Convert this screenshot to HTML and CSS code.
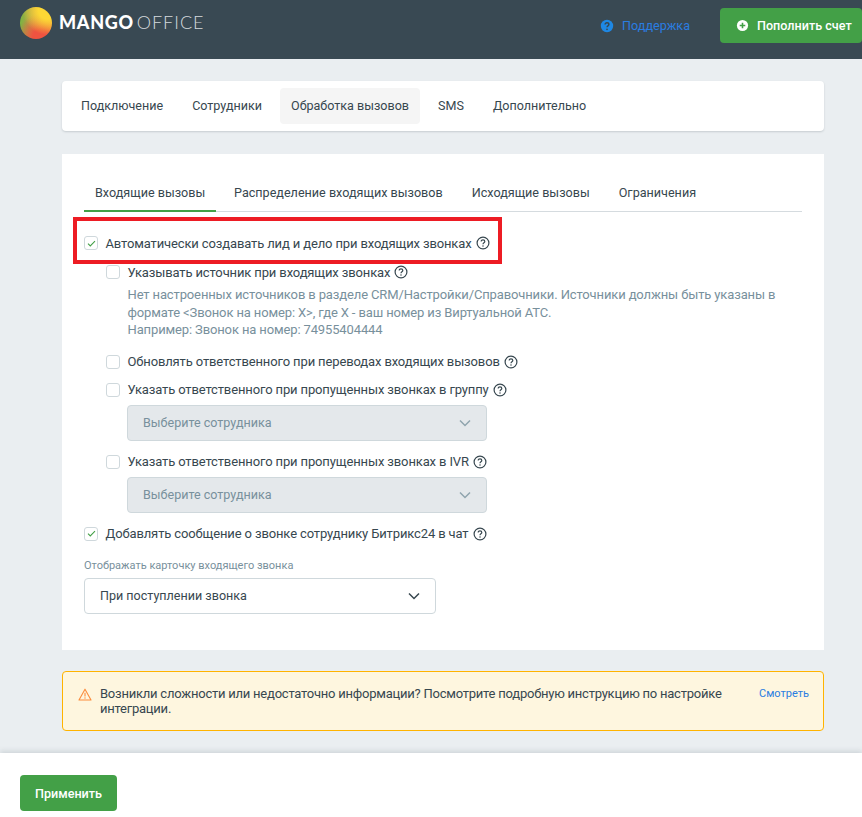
FILE: index.html
```html
<!DOCTYPE html>
<html lang="ru">
<head>
<meta charset="utf-8">
<title>MANGO OFFICE</title>
<link rel="stylesheet" href="styles.css">
</head>
<body>
<svg class="defs" width="0" height="0" aria-hidden="true">
  <defs>
    <symbol id="help" viewBox="0 0 14 14">
      <circle cx="7" cy="7" r="5.9" fill="none" stroke="currentColor" stroke-width="1.2"/>
      <path d="M5.2 5.5c0-1 .8-1.7 1.8-1.7s1.8.7 1.8 1.6c0 1.4-1.8 1.4-1.8 2.8" fill="none" stroke="currentColor" stroke-width="1.2"/>
      <circle cx="7" cy="10" r=".75" fill="currentColor"/>
    </symbol>
    <symbol id="chev" viewBox="0 0 12 8">
      <path d="M1 1.5l5 5 5-5" fill="none" stroke="currentColor" stroke-width="1.5"/>
    </symbol>
    <symbol id="tick" viewBox="0 0 10 8">
      <path d="M1 4.2l2.6 2.6L9 1.2" fill="none" stroke="#43a047" stroke-width="1.2"/>
    </symbol>
  </defs>
</svg>

<header class="topbar">
  <div class="brand">
    <span class="logo-mark"></span>
    <span class="logo-text"><b>MANGO</b> <span>OFFICE</span></span>
  </div>
  <div class="top-actions">
    <a class="support">
      <svg class="support-icon" viewBox="0 0 14 14"><circle cx="7" cy="7" r="6.2" fill="#1e88e5"/><path d="M5.1 5.6c0-1.1.8-1.8 1.9-1.8s1.9.7 1.9 1.7c0 1.4-1.9 1.3-1.9 2.7" fill="none" stroke="#37474f" stroke-width="1.4"/><circle cx="7" cy="10.3" r=".85" fill="#37474f"/></svg>
      Поддержка
    </a>
    <button class="btn topup">
      <svg class="plus-icon" viewBox="0 0 14 14"><circle cx="7" cy="7" r="6" fill="#fff"/><path d="M7 4v6M4 7h6" stroke="#43a047" stroke-width="1.7"/></svg>
      Пополнить счет
    </button>
  </div>
</header>

<main class="content">
  <nav class="card main-tabs">
    <a class="main-tab">Подключение</a>
    <a class="main-tab">Сотрудники</a>
    <a class="main-tab is-active">Обработка вызовов</a>
    <a class="main-tab">SMS</a>
    <a class="main-tab">Дополнительно</a>
  </nav>

  <section class="card settings">
    <div class="sub-tabs">
      <a class="sub-tab is-active">Входящие вызовы</a>
      <a class="sub-tab">Распределение входящих вызовов</a>
      <a class="sub-tab">Исходящие вызовы</a>
      <a class="sub-tab">Ограничения</a>
    </div>

    <div class="form">
      <div class="highlight"></div>
      <label class="row">
        <span class="check"><svg class="tick"><use href="#tick"/></svg></span>
        Автоматически создавать лид и дело при входящих звонках
        <svg class="help"><use href="#help"/></svg>
      </label>

      <div class="nested">
        <label class="row row-source">
          <span class="check"></span>
          Указывать источник при входящих звонках
          <svg class="help"><use href="#help"/></svg>
        </label>
        <p class="hint">Нет настроенных источников в разделе CRM/Настройки/Справочники. Источники должны быть указаны в формате &lt;Звонок на номер: X&gt;, где X - ваш номер из Виртуальной АТС.<br>Например: Звонок на номер: 74955404444</p>

        <label class="row row-update">
          <span class="check"></span>
          Обновлять ответственного при переводах входящих вызовов
          <svg class="help"><use href="#help"/></svg>
        </label>
        <label class="row row-group">
          <span class="check"></span>
          Указать ответственного при пропущенных звонках в группу
          <svg class="help"><use href="#help"/></svg>
        </label>
        <div class="select is-disabled">
          Выберите сотрудника
          <svg class="chev"><use href="#chev"/></svg>
        </div>
        <label class="row row-ivr">
          <span class="check"></span>
          Указать ответственного при пропущенных звонках в IVR
          <svg class="help"><use href="#help"/></svg>
        </label>
        <div class="select is-disabled">
          Выберите сотрудника
          <svg class="chev"><use href="#chev"/></svg>
        </div>
      </div>

      <label class="row row-chat">
        <span class="check"><svg class="tick"><use href="#tick"/></svg></span>
        Добавлять сообщение о звонке сотруднику Битрикс24 в чат
        <svg class="help"><use href="#help"/></svg>
      </label>

      <div class="field-label">Отображать карточку входящего звонка</div>
      <div class="select select-card">
        При поступлении звонка
        <svg class="chev"><use href="#chev"/></svg>
      </div>
    </div>
  </section>

  <aside class="alert">
    <svg class="warn" viewBox="0 0 14 13"><path d="M7 1.2L13 12H1z" fill="none" stroke="#fb8c3c" stroke-width="1.1" stroke-linejoin="round"/><path d="M7 4.8v3.6" stroke="#fb8c3c" stroke-width="1.1"/><circle cx="7" cy="10" r=".7" fill="#fb8c3c"/></svg>
    <p class="alert-text">Возникли сложности или недостаточно информации? Посмотрите подробную инструкцию по настройке интеграции.</p>
    <a class="alert-link">Смотреть</a>
  </aside>
</main>

<footer class="footer">
  <button class="btn apply">Применить</button>
</footer>
</body>
</html>
```
FILE: styles.css
```css
* { box-sizing: border-box; }
html, body { margin: 0; height: 817px; overflow: hidden; }
body {
  background: #eaeef1;
  font-family: Roboto, "Liberation Sans", sans-serif;
  font-size: 13px;
  letter-spacing: -0.13px;
  color: #37474f;
  display: flex;
  flex-direction: column;
}
.defs { position: absolute; }

.topbar {
  height: 59px;
  background: #394953;
  display: flex;
  justify-content: space-between;
  padding: 9px 0 0 20px;
  flex: none;
}
.brand { display: flex; align-items: flex-start; gap: 7px; margin-top: -2px; }
.logo-mark {
  width: 32px;
  height: 32px;
  border-radius: 50%;
  background:
    radial-gradient(circle at 85% 10%, #fdd835 0 22%, transparent 62%),
    radial-gradient(circle at 65% 95%, #ef5340 0 22%, transparent 65%),
    linear-gradient(90deg, #7cb342 0%, #c9a04a 50%, #fbb034 100%);
}
.logo-text {
  font-family: Lato, "Open Sans", sans-serif;
  font-size: 18px;
  line-height: 28px;
  margin-top: 1px;
  color: #fff;
  letter-spacing: .7px;
  word-spacing: -2.5px;
  white-space: nowrap;
}
.logo-text b { font-weight: 900; }
.logo-text span { font-weight: 300; color: #d5dadd; letter-spacing: 1px; }

.top-actions { display: flex; align-items: flex-start; }
.support {
  color: #2a7de1;
  display: flex;
  align-items: center;
  gap: 8px;
  height: 33px;
  margin-right: 30px;
  font-size: 12.6px;
  letter-spacing: 0;
}
.support-icon { width: 14px; height: 14px; }
.btn {
  border: 0;
  background: #43a047;
  color: #fff;
  font: inherit;
  font-size: 12.6px;
  letter-spacing: 0;
  font-weight: 500;
  border-radius: 4px;
  display: flex;
  align-items: center;
}
.topup {
  width: 142px;
  height: 35px;
  margin-top: -1px;
  padding: 0 0 0 16px;
  gap: 8px;
  white-space: nowrap;
}
.plus-icon { width: 13px; height: 13px; flex: none; }

.content {
  flex: 1;
  padding: 22px 38px 0 62px;
}
.card {
  background: #fff;
  border-radius: 4px;
}
.main-tabs {
  height: 50px;
  display: flex;
  align-items: center;
  padding: 0 0 0 8px;
  box-shadow: 0 1px 2px rgba(55, 71, 79, .2);
}
.main-tab {
  height: 36px;
  line-height: 36px;
  padding: 0 11px;
  margin-right: 7px;
  border-radius: 4px;
  white-space: nowrap;
  font-size: 12.55px;
  letter-spacing: 0;
}
.main-tab.is-active { background: #f5f5f5; }

.settings {
  margin-top: 23px;
  padding: 20px 22px 36px;
  height: 496px;
  border-radius: 0;
}
.sub-tabs {
  display: flex;
  height: 38px;
  border-bottom: 1px solid #d5dbdf;
}
.sub-tab {
  height: 38px;
  line-height: 37px;
  padding: 0 14.5px;
  white-space: nowrap;
  font-size: 12.6px;
  letter-spacing: 0;
}
.sub-tab.is-active {
  padding: 0 11px;
  width: 132px;
  margin-right: 3.5px;
  border-bottom: 2px solid #43a047;
}

.form { position: relative; padding-top: 21px; }
.highlight {
  position: absolute;
  left: -11px;
  top: 5px;
  width: 429px;
  height: 47px;
  border: 4px solid #ed1c24;
  pointer-events: none;
}
.row {
  display: flex;
  align-items: center;
  height: 20px;
  white-space: nowrap;
}
.check {
  width: 14px;
  height: 14px;
  border: 1px solid #cfd8dc;
  border-radius: 3px;
  background: #fff;
  margin-right: 7.5px;
  display: flex;
  align-items: center;
  justify-content: center;
  flex: none;
}
.tick { width: 9px; height: 7px; }
.help { width: 14px; height: 14px; margin-left: 4px; color: #37474f; flex: none; }

.nested { padding-left: 22px; }
.row-source { margin-top: 9px; }
.hint {
  margin: 4px 0 0 21.5px;
  color: #78909c;
  line-height: 17.6px;
  width: 672px;
}
.row-update { margin-top: 13px; }
.row-group { margin-top: 8px; }
.row-ivr { margin-top: 11px; }

.select {
  height: 36px;
  width: 360px;
  margin-top: 5px;
  padding: 0 15px;
  border: 1px solid #cfd8dc;
  border-radius: 4px;
  display: flex;
  align-items: center;
  justify-content: space-between;
  background: #fff;
  font-size: 12.55px;
  letter-spacing: 0;
}
.select.is-disabled {
  margin-left: 21px;
  background: #e4e8eb;
  color: #78909c;
}
.chev { width: 12px; height: 8px; color: #37474f; }
.is-disabled .chev { color: #90a4ae; }

.row-chat { margin-top: 11px; }
.field-label {
  margin-top: 15px;
  font-size: 11px;
  letter-spacing: 0;
  line-height: 14px;
  color: #78909c;
}
.select-card { width: 352px; margin-top: 5px; }

.alert {
  margin-top: 21px;
  height: 60px;
  background: #fef6df;
  border: 1px solid #ffb300;
  border-radius: 4px;
  padding: 14px 14px 0 15px;
  display: flex;
  align-items: flex-start;
}
.warn { width: 14px; height: 13px; margin: 2px 8px 0 0; flex: none; }
.alert-text {
  margin: 0;
  width: 636px;
  line-height: 15px;
  letter-spacing: -0.23px;
}
.alert-link {
  margin-left: 23px;
  font-size: 11px;
  letter-spacing: 0;
  line-height: 15px;
  color: #2a7de1;
  white-space: nowrap;
}

.footer {
  flex: none;
  height: 64px;
  background: #fff;
  padding: 22px 20px 0;
  box-shadow: 0 -2px 5px rgba(55, 71, 79, .15);
}
.apply {
  width: 97px;
  height: 36px;
  justify-content: center;
}
```
